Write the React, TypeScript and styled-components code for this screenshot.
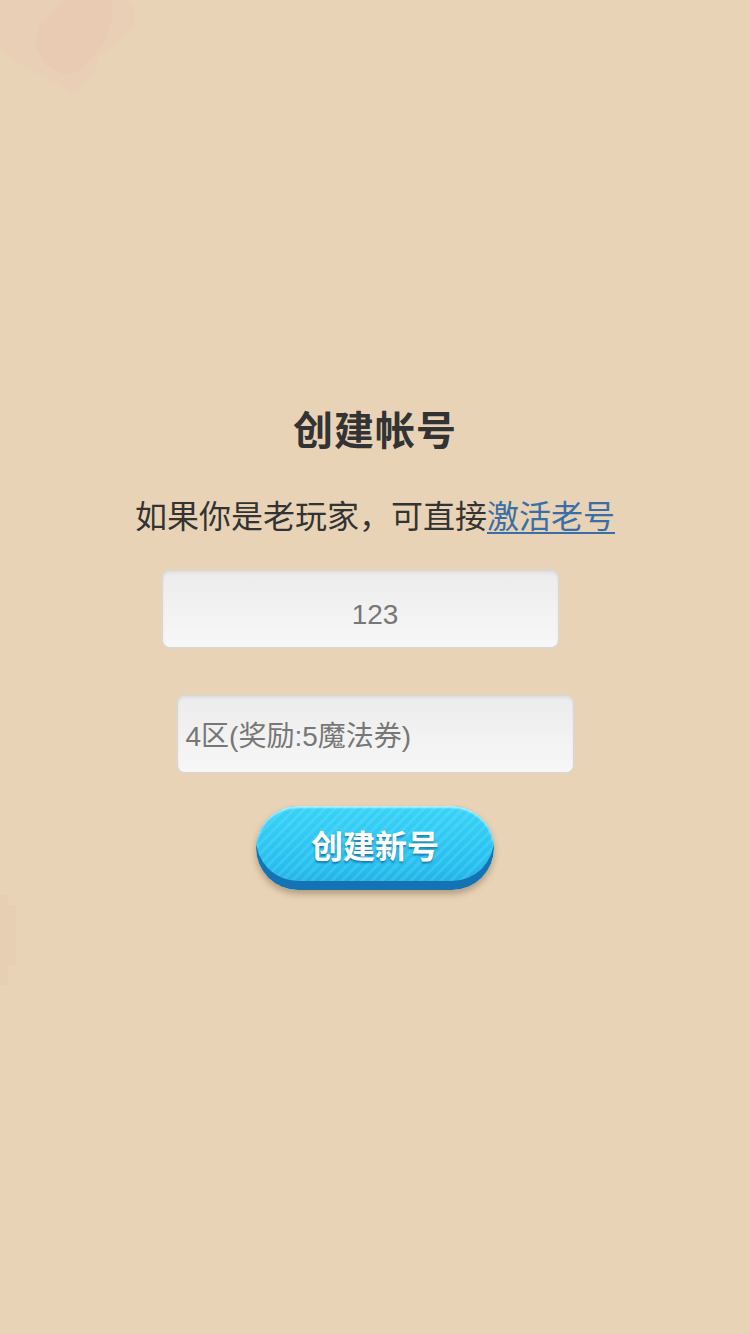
import React from "react";
import styled, { createGlobalStyle } from "styled-components";

const Global = createGlobalStyle`
  html, body { margin: 0; padding: 0; background: #e9d3b7; }
  body { font-family: "Noto Sans CJK SC", "Noto Sans", sans-serif; }
`;

const Page = styled.div`
  position: relative;
  width: 750px;
  height: 1334px;
  overflow: hidden;
  background: #e9d3b7;
  display: flex;
  flex-direction: column;
  align-items: center;
  padding-top: 398px;
  box-sizing: border-box;
`;

const Blob = styled.svg<{ $top: number; $left: number }>`
  position: absolute;
  top: ${(p) => p.$top}px;
  left: ${(p) => p.$left}px;
`;

const Title = styled.h1`
  margin: 0;
  font-size: 40px;
  line-height: 60px;
  font-weight: 700;
  color: #333;
  letter-spacing: 1px;
`;

const Lead = styled.p`
  margin: 34px 0 0;
  font-size: 32px;
  line-height: 44px;
  color: #333;
`;

const Link = styled.a`
  color: #3a6fa5;
  text-decoration: underline;
  text-underline-offset: 4px;
  text-decoration-thickness: 2px;
`;

const Fields = styled.div`
  margin-top: 33px;
  display: flex;
  flex-direction: column;
  align-items: center;
  gap: 45px;
`;

const Field = styled.div<{ $nudge: number; $align: string; $padLeft: number; $padTop: number }>`
  width: 399px;
  height: 80px;
  margin-right: ${(p) => p.$nudge}px;
  box-sizing: border-box;
  border-radius: 9px;
  border: 2px solid #ddd6cc;
  background: linear-gradient(#ececec, #f7f7f7);
  box-shadow: inset 0 2px 3px rgba(0, 0, 0, 0.06);
  display: flex;
  align-items: center;
  justify-content: ${(p) => p.$align};
  padding: ${(p) => p.$padTop}px 8px 0 ${(p) => p.$padLeft}px;
  font-family: "Liberation Sans", "Noto Sans CJK SC", sans-serif;
  font-size: 28px;
  color: #777;
`;

const Button = styled.button`
  margin-top: 32px;
  width: 238px;
  height: 84px;
  border: none;
  border-radius: 42px;
  padding: 0 0 8px;
  background:
    repeating-linear-gradient(
      135deg,
      rgba(255, 255, 255, 0.1) 0 3px,
      rgba(255, 255, 255, 0) 3px 7px
    ),
    linear-gradient(#38d3f8, #27c0ef 70%, #20ace2);
  box-shadow:
    inset 0 -9px 0 #1673b3,
    inset 0 2px 2px rgba(255, 255, 255, 0.6),
    0 4px 6px rgba(80, 60, 30, 0.35);
  color: #fff;
  font-family: "Noto Sans CJK SC", sans-serif;
  font-size: 32px;
  font-weight: 700;
  text-shadow: 0 2px 2px rgba(0, 60, 110, 0.5);
  cursor: pointer;
`;

export default function App() {
  return (
    <>
      <Global />
      <Page>
        <Blob $top={0} $left={0} width="140" height="100" viewBox="0 0 140 100">
          <path d="M0 0H125L135 10V25L120 40L100 55L95 70L85 85L75 95L50 80L20 65L0 48Z" fill="#e8cdb3" opacity="0.7" />
          <path d="M65 0H112V20L105 40L95 55L80 70L65 75L45 65L35 45L40 25Z" fill="#e9cbb4" />
        </Blob>
        <Blob $top={895} $left={0} width="18" height="90" viewBox="0 0 18 90">
          <path d="M0 0H8V10H16V70H8V90H0Z" fill="#e6cfb3" />
        </Blob>
        <Title>创建帐号</Title>
        <Lead>
          如果你是老玩家，可直接<Link href="#">激活老号</Link>
        </Lead>
        <Fields>
          <Field $nudge={30} $align="center" $padLeft={38} $padTop={12}>123</Field>
          <Field $nudge={0} $align="flex-start" $padLeft={8} $padTop={0}>4区(奖励:5魔法券)</Field>
        </Fields>
        <Button>创建新号</Button>
      </Page>
    </>
  );
}
